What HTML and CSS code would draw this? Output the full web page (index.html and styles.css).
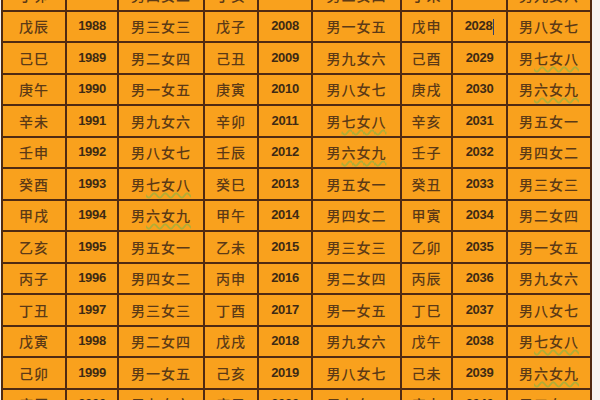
FILE: index.html
```html
<!DOCTYPE html>
<html lang="zh">
<head>
<meta charset="utf-8">
<title>生肖命卦表</title>
<link rel="stylesheet" href="styles.css">
</head>
<body>
<table class="gua">
<colgroup>
<col class="c1"><col class="c2"><col class="c3">
<col class="c4"><col class="c5"><col class="c6">
<col class="c7"><col class="c8"><col class="c9">
</colgroup>
<tbody>
<tr><td>丁卯</td><td class="yr">1987</td><td>男四女二</td><td>丁亥</td><td class="yr">2007</td><td>男二女四</td><td>丁未</td><td class="yr">2027</td><td>男九女六</td></tr>
<tr><td>戊辰</td><td class="yr">1988</td><td>男三女三</td><td>戊子</td><td class="yr">2008</td><td>男一女五</td><td>戊申</td><td class="yr">2028<span class="caret"></span></td><td>男八女七</td></tr>
<tr><td>己巳</td><td class="yr">1989</td><td>男二女四</td><td>己丑</td><td class="yr">2009</td><td>男九女六</td><td>己酉</td><td class="yr">2029</td><td>男<span class="sq">七女八</span></td></tr>
<tr><td>庚午</td><td class="yr">1990</td><td>男一女五</td><td>庚寅</td><td class="yr">2010</td><td>男八女七</td><td>庚戌</td><td class="yr">2030</td><td>男<span class="sq">六女九</span></td></tr>
<tr><td>辛未</td><td class="yr">1991</td><td>男九女六</td><td>辛卯</td><td class="yr">2011</td><td>男<span class="sq">七女八</span></td><td>辛亥</td><td class="yr">2031</td><td>男五女一</td></tr>
<tr><td>壬申</td><td class="yr">1992</td><td>男八女七</td><td>壬辰</td><td class="yr">2012</td><td>男<span class="sq">六女九</span></td><td>壬子</td><td class="yr">2032</td><td>男四女二</td></tr>
<tr><td>癸酉</td><td class="yr">1993</td><td>男<span class="sq">七女八</span></td><td>癸巳</td><td class="yr">2013</td><td>男五女一</td><td>癸丑</td><td class="yr">2033</td><td>男三女三</td></tr>
<tr><td>甲戌</td><td class="yr">1994</td><td>男<span class="sq">六女九</span></td><td>甲午</td><td class="yr">2014</td><td>男四女二</td><td>甲寅</td><td class="yr">2034</td><td>男二女四</td></tr>
<tr><td>乙亥</td><td class="yr">1995</td><td>男五女一</td><td>乙未</td><td class="yr">2015</td><td>男三女三</td><td>乙卯</td><td class="yr">2035</td><td>男一女五</td></tr>
<tr><td>丙子</td><td class="yr">1996</td><td>男四女二</td><td>丙申</td><td class="yr">2016</td><td>男二女四</td><td>丙辰</td><td class="yr">2036</td><td>男九女六</td></tr>
<tr><td>丁丑</td><td class="yr">1997</td><td>男三女三</td><td>丁酉</td><td class="yr">2017</td><td>男一女五</td><td>丁巳</td><td class="yr">2037</td><td>男八女七</td></tr>
<tr><td>戊寅</td><td class="yr">1998</td><td>男二女四</td><td>戊戌</td><td class="yr">2018</td><td>男九女六</td><td>戊午</td><td class="yr">2038</td><td>男<span class="sq">七女八</span></td></tr>
<tr><td>己卯</td><td class="yr">1999</td><td>男一女五</td><td>己亥</td><td class="yr">2019</td><td>男八女七</td><td>己未</td><td class="yr">2039</td><td>男<span class="sq">六女九</span></td></tr>
<tr><td>庚辰</td><td class="yr">2000</td><td>男九女六</td><td>庚子</td><td class="yr">2020</td><td>男<span class="sq">七女八</span></td><td>庚申</td><td class="yr">2040</td><td>男五女一</td></tr>
</tbody>
</table>
</body>
</html>
```
FILE: styles.css
```css
html, body {
  margin: 0;
  padding: 0;
  background: #f6f4f1;
  overflow: hidden;
}

.gua {
  border-collapse: collapse;
  table-layout: fixed;
  width: 591px;
  margin: -22px 0 0 1px;
  background: #f9a11d;
  font-family: "Noto Sans CJK SC", "Noto Sans", sans-serif;
  font-size: 14px;
  font-weight: 500;
  color: #5c3a16;
}

.c1 { width: 64px; }
.c2 { width: 52px; }
.c3 { width: 86px; }
.c4 { width: 54px; }
.c5 { width: 54px; }
.c6 { width: 89px; }
.c7 { width: 51px; }
.c8 { width: 55px; }
.c9 { width: 84px; }

.gua tr {
  height: 31.5px;
}

.gua td {
  border: 2px solid #4f2a12;
  padding: 0;
  text-align: center;
  vertical-align: middle;
  letter-spacing: 1px;
  line-height: 18px;
  white-space: nowrap;
}

.gua td.yr {
  font-family: "Liberation Sans", Arial, sans-serif;
  font-weight: bold;
  font-size: 13px;
  letter-spacing: -0.3px;
  color: #3e2a14;
}

.sq {
  text-decoration-line: underline;
  text-decoration-style: wavy;
  text-decoration-color: #b3ad35;
  text-decoration-thickness: 1.5px;
  text-underline-offset: 2px;
  text-decoration-skip-ink: none;
}

.caret {
  display: inline-block;
  width: 0;
  height: 16px;
  border-left: 1.5px solid #2f3f6e;
  vertical-align: middle;
  margin-left: 1px;
}
```
